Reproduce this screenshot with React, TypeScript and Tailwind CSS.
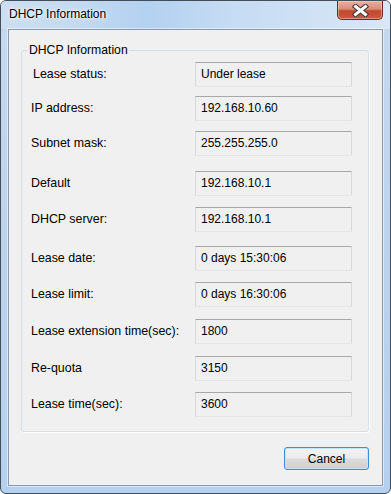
const rows = [
  { label: "Lease status:", value: "Under lease", gap: "mt-0", indent: "pl-[2px]" },
  { label: "IP address:", value: "192.168.10.60", gap: "mt-[9px]", indent: "" },
  { label: "Subnet mask:", value: "255.255.255.0", gap: "mt-[10px]", indent: "" },
  { label: "Default", value: "192.168.10.1", gap: "mt-[15px]", indent: "" },
  { label: "DHCP server:", value: "192.168.10.1", gap: "mt-[11px]", indent: "" },
  { label: "Lease date:", value: "0 days 15:30:06", gap: "mt-[14px]", indent: "" },
  { label: "Lease limit:", value: "0 days 16:30:06", gap: "mt-[11px]", indent: "" },
  { label: "Lease extension time(sec):", value: "1800", gap: "mt-[12px]", indent: "" },
  { label: "Re-quota", value: "3150", gap: "mt-[12px]", indent: "" },
  { label: "Lease time(sec):", value: "3600", gap: "mt-[11px]", indent: "" },
]

function CloseButton() {
  return (
    <div className="absolute right-[7px] top-0 w-[46px] h-[19px] rounded-b-[5px] border border-t-0 border-[#6b2b20] bg-[linear-gradient(to_bottom,#e9b1a4_0%,#dd8a78_45%,#c4452d_55%,#cc5a40_100%)] shadow-[inset_0_0_0_1px_rgba(255,220,210,0.45)] flex items-center justify-center">
      <svg width="17" height="13" viewBox="0 0 17 13">
        <path d="M3.5 2.5 L13.5 10.5 M13.5 2.5 L3.5 10.5" stroke="#3b3b3b" strokeWidth="5" strokeLinecap="square" />
        <path d="M3.5 2.5 L13.5 10.5 M13.5 2.5 L3.5 10.5" stroke="#ffffff" strokeWidth="3" strokeLinecap="square" />
      </svg>
    </div>
  )
}

function Row({ label, value, gap, indent }: { label: string; value: string; gap: string; indent: string }) {
  return (
    <div className={`flex items-start ${gap}`}>
      <div className={`w-[164px] pt-[3px] text-[12.4px] ${indent}`}>{label}</div>
      <div className="w-[157px] h-[25px] border border-t-[#a8a8a8] border-x-[#d9d9d9] border-b-[#e6e6e6] bg-[#f0f0f0] pl-[5px] pt-[2px]">
        {value}
      </div>
    </div>
  )
}

export default function App() {
  return (
    <div className="w-[391px] h-[494px] bg-white font-['Liberation_Sans',Arial,sans-serif] text-[12px] text-black">
      <div className="relative flex flex-col h-full rounded-[6px] border border-[#434d59] bg-[linear-gradient(to_bottom,#c6d9ee_0%,#bcd3ec_50%,#b5d1f0_100%)] overflow-hidden">
        {/* title bar */}
        <div className="h-[28px] shrink-0 flex items-center pl-[8px] pb-[2px] bg-[linear-gradient(90deg,#cddef0_0%,#c4daf0_18%,#b3d1f1_38%,#c6dcf3_60%,#d9e7f6_100%)]">
          <span className="[text-shadow:0_0_6px_#fff,0_0_3px_#fff]">DHCP Information</span>
        </div>
        <CloseButton />

        {/* client area */}
        <div className="flex-1 mx-[7px] mb-[7px] border border-[#8a98a8] bg-[#f0f0f0] flex flex-col shadow-[0_0_0_1px_rgba(255,255,255,0.5)]">
          <div className="relative ml-[12px] mr-[13px] mt-[20px] h-[382px] rounded-[3px] border border-[#d5dfe5] shadow-[1px_1px_0_#ffffff]">
            <div className="absolute left-[6px] top-[-8px] px-[1px] bg-[#f0f0f0] leading-[14px] text-[12.2px]">DHCP Information</div>
            <div className="flex flex-col pl-[9px] pt-[11px]">
              {rows.map((r) => (
                <Row key={r.label} {...r} />
              ))}
            </div>
          </div>
          <div className="flex justify-end mr-[13px] mt-[15px]">
            <button className="w-[85px] h-[23px] rounded-[3px] border border-[#3c8fd0] bg-[linear-gradient(to_bottom,#f3f3f3_0%,#ebebeb_48%,#dcdcdc_52%,#cfcfcf_100%)] shadow-[inset_0_0_0_1px_#bfe6f8] text-[12px] text-black">
              Cancel
            </button>
          </div>
        </div>
      </div>
    </div>
  )
}
